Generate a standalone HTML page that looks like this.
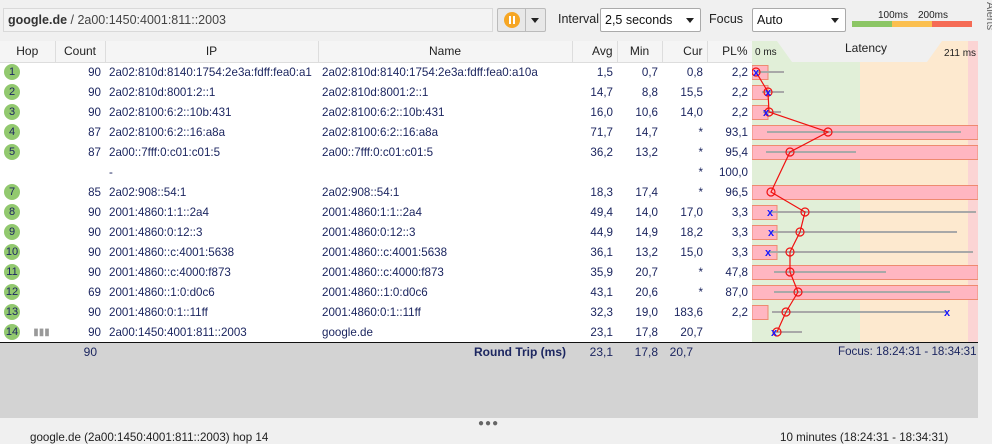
<!DOCTYPE html>
<html><head><meta charset="utf-8"><style>
*{margin:0;padding:0;box-sizing:border-box}
body{width:992px;height:437px;overflow:hidden;background:#f0f0f0;font-family:"Liberation Sans",sans-serif;font-size:12px;color:#1c2660;position:relative}
.abs{position:absolute}
.addr{left:3px;top:8px;width:490px;height:24px;border:1px solid #d9d9d9;background:#f3f3f3;padding:4px 4px;font-size:12.5px;color:#444}
.sel{background:#fff;border:1px solid #aaa;border-radius:2px;height:24px;padding:4px 4px;font-size:12.5px;color:#111}
.tri{position:absolute;right:6px;top:9px;width:0;height:0;border-left:4px solid transparent;border-right:4px solid transparent;border-top:5px solid #222}
table{position:absolute;left:0;top:41px;border-collapse:collapse;table-layout:fixed;width:752px;font-size:11.6px}
td,th{height:20px;padding:0 4px;white-space:nowrap;overflow:hidden;font-weight:normal}
th{background:#f5f5f5;border-right:1px solid #ddd;border-bottom:1px solid #ddd;color:#222;height:21px;font-size:12px}
tbody tr{background:#fff}
.r{text-align:right}
.hop{display:inline-block;width:16px;height:16px;border-radius:50%;background:#92c96f;color:#1c2660;font-size:11px;text-align:center;line-height:16px;vertical-align:middle}
</style></head><body>
<div class="abs addr"><b style="color:#333">google.de</b> / 2a00:1450:4001:811::2003</div>
<div class="abs" style="left:497px;top:8px;width:49px;height:24px;border:1px solid #bbb;border-radius:2px;background:#e8e8e8">
 <div class="abs" style="left:6px;top:3px;width:16px;height:16px;border-radius:50%;background:#f6a623"></div>
 <div class="abs" style="left:11px;top:7px;width:2px;height:8px;background:#fff"></div>
 <div class="abs" style="left:15px;top:7px;width:2px;height:8px;background:#fff"></div>
 <div class="abs" style="left:27px;top:0;width:1px;height:22px;background:#bbb"></div>
 <div class="tri" style="right:6px;top:9px"></div>
</div>
<div class="abs" style="left:558px;top:12px;font-size:12.5px;color:#222">Interval</div>
<div class="abs sel" style="left:600px;top:8px;width:101px">2,5 seconds<div class="tri"></div></div>
<div class="abs" style="left:709px;top:12px;font-size:12.5px;color:#222">Focus</div>
<div class="abs sel" style="left:752px;top:8px;width:94px">Auto<div class="tri"></div></div>
<div class="abs" style="left:878px;top:10px;font-size:10px;color:#222">100ms</div>
<div class="abs" style="left:918px;top:10px;font-size:10px;color:#222">200ms</div>
<div class="abs" style="left:852px;top:21px;width:40px;height:6px;background:#8cc665"></div>
<div class="abs" style="left:892px;top:21px;width:40px;height:6px;background:#fbbf4f"></div>
<div class="abs" style="left:932px;top:21px;width:40px;height:6px;background:#f56b55"></div>
<div class="abs" style="left:980px;top:0;width:12px;height:437px;background:#f0f0f0"></div>
<div class="abs" style="left:984px;top:2px;font-size:11px;color:#666;writing-mode:vertical-rl">Alerts</div>

<table>
<colgroup><col style="width:55px"><col style="width:50px"><col style="width:213px"><col style="width:254px"><col style="width:45px"><col style="width:45px"><col style="width:45px"><col style="width:45px"></colgroup>
<thead><tr><th>Hop</th><th>Count</th><th>IP</th><th>Name</th><th class="r">Avg</th><th style="text-align:center">Min</th><th class="r">Cur</th><th class="r">PL%</th></tr></thead>
<tbody>
<tr><td><span class="hop">1</span></td><td class="r">90</td><td>2a02:810d:8140:1754:2e3a:fdff:fea0:a1</td><td>2a02:810d:8140:1754:2e3a:fdff:fea0:a10a</td><td class="r">1,5</td><td class="r">0,7</td><td class="r">0,8</td><td class="r">2,2</td></tr>
<tr><td><span class="hop">2</span></td><td class="r">90</td><td>2a02:810d:8001:2::1</td><td>2a02:810d:8001:2::1</td><td class="r">14,7</td><td class="r">8,8</td><td class="r">15,5</td><td class="r">2,2</td></tr>
<tr><td><span class="hop">3</span></td><td class="r">90</td><td>2a02:8100:6:2::10b:431</td><td>2a02:8100:6:2::10b:431</td><td class="r">16,0</td><td class="r">10,6</td><td class="r">14,0</td><td class="r">2,2</td></tr>
<tr><td><span class="hop">4</span></td><td class="r">87</td><td>2a02:8100:6:2::16:a8a</td><td>2a02:8100:6:2::16:a8a</td><td class="r">71,7</td><td class="r">14,7</td><td class="r">*</td><td class="r">93,1</td></tr>
<tr><td><span class="hop">5</span></td><td class="r">87</td><td>2a00::7fff:0:c01:c01:5</td><td>2a00::7fff:0:c01:c01:5</td><td class="r">36,2</td><td class="r">13,2</td><td class="r">*</td><td class="r">95,4</td></tr>
<tr><td></td><td></td><td>-</td><td></td><td></td><td></td><td class="r">*</td><td class="r">100,0</td></tr>
<tr><td><span class="hop">7</span></td><td class="r">85</td><td>2a02:908::54:1</td><td>2a02:908::54:1</td><td class="r">18,3</td><td class="r">17,4</td><td class="r">*</td><td class="r">96,5</td></tr>
<tr><td><span class="hop">8</span></td><td class="r">90</td><td>2001:4860:1:1::2a4</td><td>2001:4860:1:1::2a4</td><td class="r">49,4</td><td class="r">14,0</td><td class="r">17,0</td><td class="r">3,3</td></tr>
<tr><td><span class="hop">9</span></td><td class="r">90</td><td>2001:4860:0:12::3</td><td>2001:4860:0:12::3</td><td class="r">44,9</td><td class="r">14,9</td><td class="r">18,2</td><td class="r">3,3</td></tr>
<tr><td><span class="hop">10</span></td><td class="r">90</td><td>2001:4860::c:4001:5638</td><td>2001:4860::c:4001:5638</td><td class="r">36,1</td><td class="r">13,2</td><td class="r">15,0</td><td class="r">3,3</td></tr>
<tr><td><span class="hop">11</span></td><td class="r">90</td><td>2001:4860::c:4000:f873</td><td>2001:4860::c:4000:f873</td><td class="r">35,9</td><td class="r">20,7</td><td class="r">*</td><td class="r">47,8</td></tr>
<tr><td><span class="hop">12</span></td><td class="r">69</td><td>2001:4860::1:0:d0c6</td><td>2001:4860::1:0:d0c6</td><td class="r">43,1</td><td class="r">20,6</td><td class="r">*</td><td class="r">87,0</td></tr>
<tr><td><span class="hop">13</span></td><td class="r">90</td><td>2001:4860:0:1::11ff</td><td>2001:4860:0:1::11ff</td><td class="r">32,3</td><td class="r">19,0</td><td class="r">183,6</td><td class="r">2,2</td></tr>
<tr><td><span class="hop">14</span> <span style="color:#999;font-size:10px;margin-left:10px">▮▮▮</span></td><td class="r">90</td><td>2a00:1450:4001:811::2003</td><td>google.de</td><td class="r">23,1</td><td class="r">17,8</td><td class="r">20,7</td><td></td></tr>
</tbody></table>

<svg class="abs" style="left:752px;top:41px" width="226" height="302">
<rect x="0" y="0" width="226" height="21" fill="#f0f0f0"/>
<polygon points="0,0 25,0 40,21 0,21" fill="#e1efd8"/>
<polygon points="190,0 216,0 216,21 175,21" fill="#fde9cf"/>
<rect x="216" y="0" width="10" height="21" fill="#fbd4d4"/>
<text x="3" y="14" font-size="10" fill="#222" font-family="Liberation Sans">0 ms</text>
<text x="93" y="11" font-size="12" fill="#222" font-family="Liberation Sans">Latency</text>
<text x="192" y="15" font-size="10" fill="#222" font-family="Liberation Sans">211 ms</text>
<rect x="0" y="21" width="108" height="281" fill="#e1efd8"/>
<rect x="108" y="21" width="108" height="281" fill="#fde9cf"/>
<rect x="216" y="21" width="10" height="281" fill="#fbd4d4"/>
<g fill="#ffb6c1" stroke="#ee8a70" stroke-width="1">
<rect x="0" y="24.5" width="16" height="14"/><rect x="0" y="44.5" width="16" height="14"/><rect x="0" y="64.5" width="16" height="14"/>
<rect x="0" y="84.5" width="226" height="14"/><rect x="0" y="104.5" width="226" height="14"/>
<rect x="0" y="144.5" width="226" height="14"/>
<rect x="0" y="164.5" width="25" height="14"/><rect x="0" y="184.5" width="25" height="14"/><rect x="0" y="204.5" width="25" height="14"/>
<rect x="0" y="224.5" width="226" height="14"/><rect x="0" y="244.5" width="226" height="14"/>
<rect x="0" y="264.5" width="16" height="14"/>
</g>
<g stroke="#a8a8a8" stroke-width="2">
<line x1="4" y1="31" x2="32" y2="31"/><line x1="10" y1="51" x2="32" y2="51"/><line x1="11" y1="71" x2="29" y2="71"/>
<line x1="15" y1="91" x2="209" y2="91"/><line x1="14" y1="111" x2="104" y2="111"/>
<line x1="18" y1="171" x2="224" y2="171"/><line x1="19" y1="191" x2="205" y2="191"/><line x1="16" y1="211" x2="221" y2="211"/>
<line x1="22" y1="231" x2="134" y2="231"/><line x1="22" y1="251" x2="198" y2="251"/><line x1="20" y1="271" x2="195" y2="271"/>
<line x1="22" y1="291" x2="50" y2="291"/>
</g>
<polyline fill="none" stroke="#f01010" stroke-width="1.2" points="4,31 16,51 17,71 76,91 38,111 19,151 53,171 48,191 38,211 38,231 46,251 34,271 25,291"/>
<g fill="none" stroke="#f01010" stroke-width="1.2">
<circle cx="4" cy="31" r="4"/><circle cx="16" cy="51" r="4"/><circle cx="17" cy="71" r="4"/><circle cx="76" cy="91" r="4"/><circle cx="38" cy="111" r="4"/><circle cx="19" cy="151" r="4"/><circle cx="53" cy="171" r="4"/><circle cx="48" cy="191" r="4"/><circle cx="38" cy="211" r="4"/><circle cx="38" cy="231" r="4"/><circle cx="46" cy="251" r="4"/><circle cx="34" cy="271" r="4"/><circle cx="25" cy="291" r="4"/>
</g>
<g fill="#1a1aff" font-size="11" font-family="Liberation Sans" text-anchor="middle" font-weight="bold">
<text x="4" y="35">x</text><text x="16" y="55">x</text><text x="14" y="75">x</text><text x="18" y="175">x</text><text x="19" y="195">x</text><text x="16" y="215">x</text><text x="195" y="275">x</text><text x="22" y="295">x</text>
</g>
</svg>

<div class="abs" style="left:0;top:342px;width:978px;height:1px;background:#111"></div>
<div class="abs" style="left:0;top:343px;width:978px;height:75px;background:#d3d3d3"></div>
<div class="abs" style="left:80px;top:345px;width:17px;text-align:right">90</div>
<div class="abs" style="left:474px;top:345px;font-weight:bold">Round Trip (ms)</div>
<div class="abs" style="left:580px;top:345px;width:33px;text-align:right">23,1</div>
<div class="abs" style="left:625px;top:345px;width:33px;text-align:right">17,8</div>
<div class="abs" style="left:660px;top:345px;width:33px;text-align:right">20,7</div>
<div class="abs" style="left:838px;top:345px;font-size:11.6px">Focus: 18:24:31 - 18:34:31</div>
<div class="abs" style="left:478px;top:418px;font-size:10px;color:#666;letter-spacing:1px">●●●</div>
<div class="abs" style="left:30px;top:431px;color:#222;font-size:11.6px">google.de (2a00:1450:4001:811::2003) hop 14</div>
<div class="abs" style="left:780px;top:431px;color:#222;font-size:11.6px">10 minutes (18:24:31 - 18:34:31)</div>
</body></html>
